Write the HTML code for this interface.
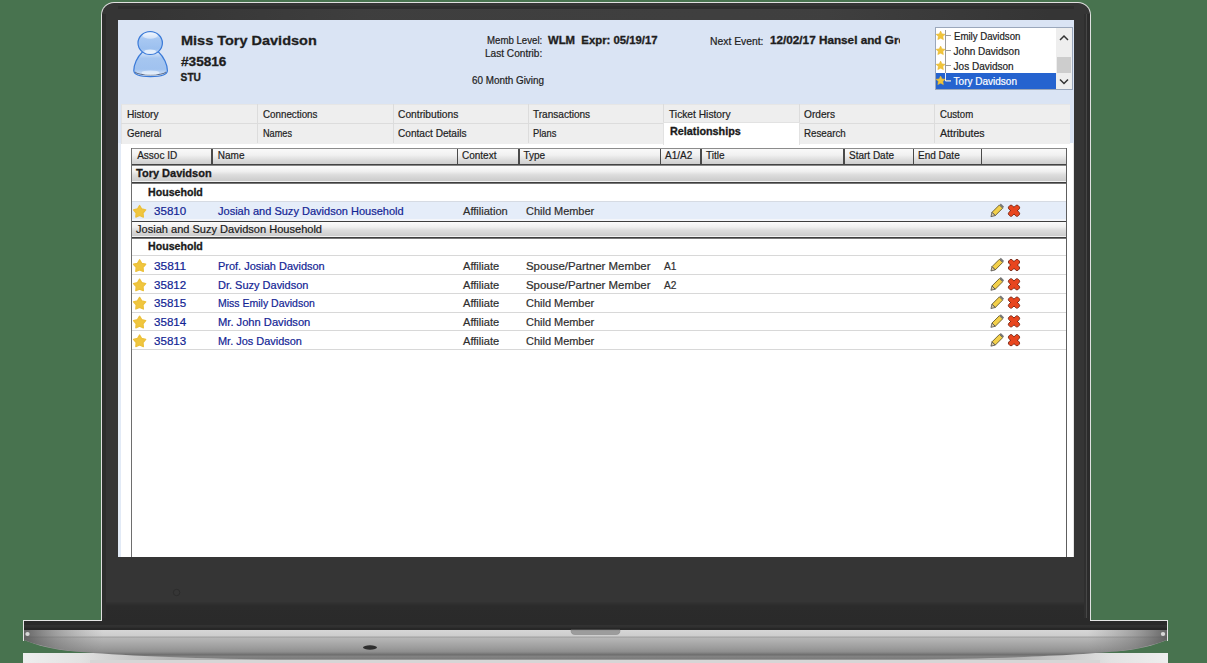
<!DOCTYPE html>
<html><head><meta charset="utf-8">
<style>
*{margin:0;padding:0;box-sizing:border-box}
html,body{width:1207px;height:663px;overflow:hidden;background:#48734f;font-family:"Liberation Sans",sans-serif;position:relative}
.a{position:absolute}
.t{position:absolute;white-space:nowrap;-webkit-text-stroke:0.2px currentColor}
svg{position:absolute;overflow:visible}
</style></head><body>

<div class="a" style="left:101px;top:2px;width:990px;height:620px;background:#e0e0e0;border-radius:13px 13px 0 0"></div>
<div class="a" style="left:102px;top:3px;width:988px;height:618px;background:#353535;border-radius:12px 12px 0 0"></div>
<div class="a" style="left:102px;top:602px;width:988px;height:19px;background:linear-gradient(#333,#2b2b2b 4px,#2a2a2a)"></div>
<div class="a" style="left:140px;top:9px;width:910px;height:11px;background:linear-gradient(90deg,rgba(70,70,70,0),rgba(70,70,70,0.55) 25%,rgba(70,70,70,0.6) 75%,rgba(70,70,70,0))"></div>
<div class="a" style="left:118px;top:6px;width:956px;height:3px;background:#2e2e2e"></div>
<div class="a" style="left:102px;top:14px;width:4px;height:604px;background:#2d2d2d"></div>
<div class="a" style="left:1084px;top:14px;width:2px;height:604px;background:#2f2f2f"></div>
<div class="a" style="left:1086px;top:14px;width:1px;height:604px;background:#474747"></div>
<div class="a" style="left:1087px;top:14px;width:3px;height:604px;background:#2b2b2b"></div>
<svg style="left:0;top:0" width="1207" height="663"><circle cx="176.6" cy="592.5" r="3.2" fill="#363636" stroke="#2a2a2a" stroke-width="0.9"/></svg>
<div class="a" style="left:118px;top:20px;width:956px;height:537px;background:#fff"></div>
<div class="a" style="left:118px;top:20px;width:956px;height:124px;background:#dae4f4"></div>
<div class="a" style="left:118px;top:143px;width:956px;height:414px;background:#fff;border-left:1px solid #e4e4e4;border-right:1px solid #e4e4e4"></div>
<svg style="left:130px;top:29px" width="42" height="52" viewBox="0 0 42 52">
<defs>
<linearGradient id="hg" x1="0" y1="0" x2="0" y2="1"><stop offset="0" stop-color="#f2f7fe"/><stop offset="0.3" stop-color="#a8c8f2"/><stop offset="0.75" stop-color="#9cc0ef"/><stop offset="1" stop-color="#cfe0f8"/></linearGradient>
<linearGradient id="bg" x1="0" y1="0" x2="0" y2="1"><stop offset="0" stop-color="#dce9fa"/><stop offset="0.25" stop-color="#a6c6f0"/><stop offset="0.7" stop-color="#a0c2ef"/><stop offset="1" stop-color="#e4eefb"/></linearGradient>
</defs>
<path d="M12.5 23 C7 28 3.8 36 3.8 41.5 C3.8 46.5 12 47.6 20.5 47.6 C29 47.6 37.4 46.5 37.4 41.5 C37.4 36 34 28 28.5 23 Z" fill="url(#bg)" stroke="#3a7ad8" stroke-width="1.2"/>
<path d="M5 43 C8 47 33 47 36 43" fill="none" stroke="#5a6a88" stroke-width="1"/>
<ellipse cx="20.2" cy="14.1" rx="12.2" ry="11.4" fill="url(#hg)" stroke="#3a7ad8" stroke-width="1.2"/>
<ellipse cx="20.2" cy="6.5" rx="7.5" ry="3.2" fill="#f4f8fe" opacity="0.55"/>
<ellipse cx="20.2" cy="22.6" rx="6" ry="2.2" fill="#f4f8fe" opacity="0.75"/>
<ellipse cx="20.5" cy="43.8" rx="9" ry="2.4" fill="#f4f8fe" opacity="0.6"/>
</svg>
<div class="t" style="left:180.60px;top:34.39px;font-size:13.6px;line-height:13.6px;color:#1e1e1e;font-weight:bold;-webkit-text-stroke:0.3px currentColor;transform:scaleX(1.0653);transform-origin:0.00px 0;">Miss Tory Davidson</div>
<div class="t" style="left:180.60px;top:56.44px;font-size:12.0px;line-height:12.0px;color:#1e1e1e;font-weight:bold;-webkit-text-stroke:0.3px currentColor;transform:scaleX(1.1338);transform-origin:0.00px 0;">#35816</div>
<div class="t" style="left:180.60px;top:72.87px;font-size:10.2px;line-height:10.2px;color:#1e1e1e;font-weight:bold;-webkit-text-stroke:0.3px currentColor;transform:scaleX(1.0000);transform-origin:0.00px 0;">STU</div>
<div class="t" style="left:487.40px;top:36.23px;font-size:10.0px;line-height:10.0px;color:#222;transform:scaleX(0.9642);transform-origin:0.00px 0;">Memb Level:</div>
<div class="t" style="left:547.80px;top:36.14px;font-size:10.0px;line-height:10.0px;color:#1e1e1e;font-weight:bold;-webkit-text-stroke:0.3px currentColor;transform:scaleX(1.1334);transform-origin:0.00px 0;">WLM&nbsp; Expr: 05/19/17</div>
<div class="t" style="left:485.40px;top:49.23px;font-size:10.0px;line-height:10.0px;color:#222;transform:scaleX(1.0090);transform-origin:0.00px 0;">Last Contrib:</div>
<div class="t" style="left:471.50px;top:75.73px;font-size:10.0px;line-height:10.0px;color:#222;transform:scaleX(0.9887);transform-origin:0.00px 0;">60 Month Giving</div>
<div class="t" style="left:710.00px;top:36.53px;font-size:10.0px;line-height:10.0px;color:#222;transform:scaleX(1.0350);transform-origin:0.00px 0;">Next Event:</div>
<div class="a" style="left:769px;top:30px;width:131px;height:20px;overflow:hidden">
<div class="t" style="left:0.60px;top:6.44px;font-size:10.0px;line-height:10.0px;color:#1e1e1e;font-weight:bold;-webkit-text-stroke:0.3px currentColor;transform:scaleX(1.1733);transform-origin:0.00px 0;">12/02/17 Hansel and Gre</div>
</div>
<div class="a" style="left:935px;top:27px;width:138px;height:63px;background:#fff;border:1px solid #9aa7bb"></div>
<div class="a" style="left:1056px;top:28px;width:16px;height:61px;background:#eeeeee"></div>
<div class="a" style="left:1057px;top:57px;width:14px;height:16px;background:#cdcdcd"></div>
<div class="a" style="left:936px;top:73px;width:120px;height:16px;background:#2563cf"></div>
<svg style="left:0;top:0" width="1207" height="663">
<path d="M1060 40 L1064 36 L1068 40" fill="none" stroke="#333" stroke-width="1.5"/>
<path d="M1060 79.5 L1064 83.5 L1068 79.5" fill="none" stroke="#333" stroke-width="1.5"/>
<path d="M945.5 30 V81 M945.5 35.5 H951 M945.5 50.5 H951 M945.5 65.5 H951 M945.5 80.5 H951" stroke="#9a9a9a" stroke-width="1" fill="none"/><path d="M945.5 73 V81 H951" stroke="#e8eefa" stroke-width="1" fill="none"/>
</svg>
<svg style="left:0;top:0" width="1207" height="663"><polygon points="940.60,31.10 941.98,33.90 945.07,34.35 942.83,36.53 943.36,39.60 940.60,38.15 937.84,39.60 938.37,36.53 936.13,34.35 939.22,33.90" fill="#f0c43a" stroke="#e8b830" stroke-width="0.6" stroke-linejoin="round"/><polygon points="940.60,46.10 941.98,48.90 945.07,49.35 942.83,51.53 943.36,54.60 940.60,53.15 937.84,54.60 938.37,51.53 936.13,49.35 939.22,48.90" fill="#f0c43a" stroke="#e8b830" stroke-width="0.6" stroke-linejoin="round"/><polygon points="940.60,61.10 941.98,63.90 945.07,64.35 942.83,66.53 943.36,69.60 940.60,68.15 937.84,69.60 938.37,66.53 936.13,64.35 939.22,63.90" fill="#f0c43a" stroke="#e8b830" stroke-width="0.6" stroke-linejoin="round"/><polygon points="940.60,76.10 941.98,78.90 945.07,79.35 942.83,81.53 943.36,84.60 940.60,83.15 937.84,84.60 938.37,81.53 936.13,79.35 939.22,78.90" fill="#f0c43a" stroke="#e8b830" stroke-width="0.6" stroke-linejoin="round"/></svg>
<div class="t" style="left:953.60px;top:32.03px;font-size:10.0px;line-height:10.0px;color:#222;transform:scaleX(0.9636);transform-origin:0.00px 0;">Emily Davidson</div>
<div class="t" style="left:953.60px;top:47.03px;font-size:10.0px;line-height:10.0px;color:#222;">John Davidson</div>
<div class="t" style="left:953.60px;top:62.03px;font-size:10.0px;line-height:10.0px;color:#222;">Jos Davidson</div>
<div class="t" style="left:953.60px;top:77.03px;font-size:10.0px;line-height:10.0px;color:#fff;">Tory Davidson</div>
<div class="a" style="left:121px;top:104px;width:949px;height:39.5px;background:#eeeeee;border-left:1px solid #e2e2e2;border-top:1px solid #e6e6e6"></div>
<div class="a" style="left:257px;top:104px;width:1px;height:39px;background:#dcdcdc"></div>
<div class="a" style="left:393px;top:104px;width:1px;height:39px;background:#dcdcdc"></div>
<div class="a" style="left:528px;top:104px;width:1px;height:39px;background:#dcdcdc"></div>
<div class="a" style="left:663px;top:104px;width:1px;height:39px;background:#dcdcdc"></div>
<div class="a" style="left:799px;top:104px;width:1px;height:39px;background:#dcdcdc"></div>
<div class="a" style="left:934px;top:104px;width:1px;height:39px;background:#dcdcdc"></div>
<div class="a" style="left:121px;top:123px;width:949px;height:1px;background:#dcdcdc"></div>
<div class="a" style="left:663px;top:122px;width:137px;height:23px;background:#fff;border-left:1px solid #e2e2e2;border-right:1px solid #e2e2e2;border-top:1px solid #e2e2e2"></div>
<div class="t" style="left:127.20px;top:109.77px;font-size:10.2px;line-height:10.2px;color:#222;transform:scaleX(0.9927);transform-origin:0.00px 0;">History</div>
<div class="t" style="left:127.20px;top:128.97px;font-size:10.2px;line-height:10.2px;color:#222;transform:scaleX(0.9479);transform-origin:0.00px 0;">General</div>
<div class="t" style="left:262.60px;top:109.77px;font-size:10.2px;line-height:10.2px;color:#222;transform:scaleX(0.9612);transform-origin:0.00px 0;">Connections</div>
<div class="t" style="left:262.60px;top:128.97px;font-size:10.2px;line-height:10.2px;color:#222;transform:scaleX(0.8975);transform-origin:0.00px 0;">Names</div>
<div class="t" style="left:398.00px;top:109.77px;font-size:10.2px;line-height:10.2px;color:#222;transform:scaleX(1.0050);transform-origin:0.00px 0;">Contributions</div>
<div class="t" style="left:398.00px;top:128.97px;font-size:10.2px;line-height:10.2px;color:#222;transform:scaleX(0.9918);transform-origin:0.00px 0;">Contact Details</div>
<div class="t" style="left:533.40px;top:109.77px;font-size:10.2px;line-height:10.2px;color:#222;transform:scaleX(0.9859);transform-origin:0.00px 0;">Transactions</div>
<div class="t" style="left:533.40px;top:128.97px;font-size:10.2px;line-height:10.2px;color:#222;transform:scaleX(0.9173);transform-origin:0.00px 0;">Plans</div>
<div class="t" style="left:668.80px;top:109.77px;font-size:10.2px;line-height:10.2px;color:#222;transform:scaleX(1.0034);transform-origin:0.00px 0;">Ticket History</div>
<div class="t" style="left:669.70px;top:127.30px;font-size:10.4px;line-height:10.4px;color:#1a1a1a;font-weight:bold;-webkit-text-stroke:0.3px currentColor;transform:scaleX(1.0397);transform-origin:0.00px 0;">Relationships</div>
<div class="t" style="left:804.20px;top:109.77px;font-size:10.2px;line-height:10.2px;color:#222;transform:scaleX(0.9945);transform-origin:0.00px 0;">Orders</div>
<div class="t" style="left:804.20px;top:128.97px;font-size:10.2px;line-height:10.2px;color:#222;transform:scaleX(0.9575);transform-origin:0.00px 0;">Research</div>
<div class="t" style="left:939.60px;top:109.77px;font-size:10.2px;line-height:10.2px;color:#222;transform:scaleX(0.9448);transform-origin:0.00px 0;">Custom</div>
<div class="t" style="left:939.60px;top:128.97px;font-size:10.2px;line-height:10.2px;color:#222;transform:scaleX(1.0375);transform-origin:0.00px 0;">Attributes</div>
<div class="a" style="left:118px;top:143px;width:3px;height:414px;background:#e2eaf6"></div>
<div class="a" style="left:131px;top:148px;width:936px;height:409px;background:#fff;border-left:1px solid #6e6e6e;border-right:1px solid #5e5e5e"></div>
<div class="a" style="left:132px;top:148px;width:934px;height:1px;background:#8c8c8c"></div>
<div class="a" style="left:132px;top:149px;width:934px;height:15px;background:linear-gradient(#f9f9f9,#f1f1f1 40%,#dedede 70%,#cfcfcf)"></div>
<div class="a" style="left:132px;top:164px;width:934px;height:1px;background:#444"></div>
<div class="a" style="left:132px;top:165px;width:934px;height:0.5px;background:#888"></div>
<div class="a" style="left:211px;top:149px;width:1.6px;height:15px;background:#4a4a4a"></div>
<div class="a" style="left:456.5px;top:149px;width:1.6px;height:15px;background:#4a4a4a"></div>
<div class="a" style="left:518px;top:149px;width:1.6px;height:15px;background:#4a4a4a"></div>
<div class="a" style="left:659.5px;top:149px;width:1.6px;height:15px;background:#4a4a4a"></div>
<div class="a" style="left:700px;top:149px;width:1.6px;height:15px;background:#4a4a4a"></div>
<div class="a" style="left:843px;top:149px;width:1.6px;height:15px;background:#4a4a4a"></div>
<div class="a" style="left:912.5px;top:149px;width:1.6px;height:15px;background:#4a4a4a"></div>
<div class="a" style="left:980.5px;top:149px;width:1.6px;height:15px;background:#4a4a4a"></div>
<div class="t" style="left:137.20px;top:151.34px;font-size:10.0px;line-height:10.0px;color:#1e1e1e;">Assoc ID</div>
<div class="t" style="left:217.80px;top:151.34px;font-size:10.0px;line-height:10.0px;color:#1e1e1e;">Name</div>
<div class="t" style="left:462.00px;top:151.34px;font-size:10.0px;line-height:10.0px;color:#1e1e1e;">Context</div>
<div class="t" style="left:523.50px;top:151.34px;font-size:10.0px;line-height:10.0px;color:#1e1e1e;">Type</div>
<div class="t" style="left:665.00px;top:151.34px;font-size:10.0px;line-height:10.0px;color:#1e1e1e;">A1/A2</div>
<div class="t" style="left:706.00px;top:151.34px;font-size:10.0px;line-height:10.0px;color:#1e1e1e;">Title</div>
<div class="t" style="left:849.00px;top:151.34px;font-size:10.0px;line-height:10.0px;color:#1e1e1e;">Start Date</div>
<div class="t" style="left:918.00px;top:151.34px;font-size:10.0px;line-height:10.0px;color:#1e1e1e;">End Date</div>
<div class="a" style="left:132px;top:165.5px;width:934px;height:15.5px;background:linear-gradient(#fcfcfc,#f0f0f0 35%,#dcdcdc 60%,#cccccc)"></div>
<div class="a" style="left:132px;top:181px;width:934px;height:1px;background:#f2f2f2"></div>
<div class="a" style="left:132px;top:182px;width:934px;height:1px;background:#3e3e3e"></div>
<div class="a" style="left:132px;top:183px;width:934px;height:0.4px;background:#777"></div>
<div class="t" style="left:136.30px;top:168.46px;font-size:10.8px;line-height:10.8px;color:#1a1a1a;font-weight:bold;-webkit-text-stroke:0.3px currentColor;transform:scaleX(1.0200);transform-origin:0.00px 0;">Tory Davidson</div>
<div class="t" style="left:147.60px;top:187.50px;font-size:10.4px;line-height:10.4px;color:#1a1a1a;font-weight:bold;-webkit-text-stroke:0.3px currentColor;transform:scaleX(1.0216);transform-origin:0.00px 0;">Household</div>
<div class="a" style="left:132px;top:201px;width:934px;height:1px;background:#d6dbe3"></div>
<div class="a" style="left:132px;top:202px;width:934px;height:17px;background:#e5edf9"></div>
<div class="a" style="left:132px;top:219px;width:934px;height:2px;background:#f4f6fa"></div>
<div class="a" style="left:132px;top:221px;width:934px;height:1px;background:#3e3e3e"></div>
<div class="a" style="left:132px;top:222px;width:934px;height:14px;background:linear-gradient(#fcfcfc,#f0f0f0 35%,#dcdcdc 60%,#cccccc)"></div>
<div class="a" style="left:132px;top:236px;width:934px;height:1px;background:#f2f2f2"></div>
<div class="a" style="left:132px;top:237px;width:934px;height:1px;background:#3e3e3e"></div>
<div class="a" style="left:132px;top:238px;width:934px;height:0.4px;background:#777"></div>
<div class="t" style="left:136.00px;top:223.69px;font-size:11.0px;line-height:11.0px;color:#1a1a1a;transform:scaleX(1.0039);transform-origin:0.00px 0;">Josiah and Suzy Davidson Household</div>
<div class="t" style="left:147.60px;top:241.60px;font-size:10.4px;line-height:10.4px;color:#1a1a1a;font-weight:bold;-webkit-text-stroke:0.3px currentColor;transform:scaleX(1.0216);transform-origin:0.00px 0;">Household</div>
<div class="a" style="left:132px;top:255px;width:934px;height:1px;background:#d8d8d8"></div>
<div class="a" style="left:132px;top:274px;width:934px;height:1px;background:#d8d8d8"></div>
<div class="a" style="left:132px;top:293px;width:934px;height:1px;background:#d8d8d8"></div>
<div class="a" style="left:132px;top:312px;width:934px;height:1px;background:#d8d8d8"></div>
<div class="a" style="left:132px;top:330px;width:934px;height:1px;background:#d8d8d8"></div>
<div class="a" style="left:132px;top:349px;width:934px;height:1px;background:#d8d8d8"></div>
<div class="t" style="left:154.40px;top:206.29px;font-size:11.0px;line-height:11.0px;color:#122494;transform:scaleX(1.0526);transform-origin:0.00px 0;">35810</div>
<div class="t" style="left:218.20px;top:206.29px;font-size:11.0px;line-height:11.0px;color:#122494;transform:scaleX(1.0022);transform-origin:0.00px 0;">Josiah and Suzy Davidson Household</div>
<div class="t" style="left:463.30px;top:206.29px;font-size:11.0px;line-height:11.0px;color:#2e2e2e;transform:scaleX(1.0059);transform-origin:0.00px 0;">Affiliation</div>
<div class="t" style="left:526.00px;top:206.29px;font-size:11.0px;line-height:11.0px;color:#2e2e2e;transform:scaleX(0.9961);transform-origin:0.00px 0;">Child Member</div>
<div class="t" style="left:154.40px;top:260.59px;font-size:11.0px;line-height:11.0px;color:#122494;transform:scaleX(1.0814);transform-origin:0.00px 0;">35811</div>
<div class="t" style="left:218.20px;top:260.59px;font-size:11.0px;line-height:11.0px;color:#122494;transform:scaleX(0.9972);transform-origin:0.00px 0;">Prof. Josiah Davidson</div>
<div class="t" style="left:463.30px;top:260.59px;font-size:11.0px;line-height:11.0px;color:#2e2e2e;transform:scaleX(1.0092);transform-origin:0.00px 0;">Affiliate</div>
<div class="t" style="left:526.00px;top:260.59px;font-size:11.0px;line-height:11.0px;color:#2e2e2e;transform:scaleX(1.0389);transform-origin:0.00px 0;">Spouse/Partner Member</div>
<div class="t" style="left:663.80px;top:260.59px;font-size:11.0px;line-height:11.0px;color:#2e2e2e;transform:scaleX(0.9217);transform-origin:0.00px 0;">A1</div>
<div class="t" style="left:154.40px;top:279.89px;font-size:11.0px;line-height:11.0px;color:#122494;transform:scaleX(1.0526);transform-origin:0.00px 0;">35812</div>
<div class="t" style="left:218.20px;top:279.89px;font-size:11.0px;line-height:11.0px;color:#122494;transform:scaleX(0.9990);transform-origin:0.00px 0;">Dr. Suzy Davidson</div>
<div class="t" style="left:463.30px;top:279.89px;font-size:11.0px;line-height:11.0px;color:#2e2e2e;transform:scaleX(1.0092);transform-origin:0.00px 0;">Affiliate</div>
<div class="t" style="left:526.00px;top:279.89px;font-size:11.0px;line-height:11.0px;color:#2e2e2e;transform:scaleX(1.0389);transform-origin:0.00px 0;">Spouse/Partner Member</div>
<div class="t" style="left:663.80px;top:279.89px;font-size:11.0px;line-height:11.0px;color:#2e2e2e;transform:scaleX(0.9217);transform-origin:0.00px 0;">A2</div>
<div class="t" style="left:154.40px;top:298.19px;font-size:11.0px;line-height:11.0px;color:#122494;transform:scaleX(1.0526);transform-origin:0.00px 0;">35815</div>
<div class="t" style="left:218.20px;top:298.19px;font-size:11.0px;line-height:11.0px;color:#122494;transform:scaleX(0.9540);transform-origin:0.00px 0;">Miss Emily Davidson</div>
<div class="t" style="left:463.30px;top:298.19px;font-size:11.0px;line-height:11.0px;color:#2e2e2e;transform:scaleX(1.0092);transform-origin:0.00px 0;">Affiliate</div>
<div class="t" style="left:526.00px;top:298.19px;font-size:11.0px;line-height:11.0px;color:#2e2e2e;transform:scaleX(0.9961);transform-origin:0.00px 0;">Child Member</div>
<div class="t" style="left:154.40px;top:316.99px;font-size:11.0px;line-height:11.0px;color:#122494;transform:scaleX(1.0526);transform-origin:0.00px 0;">35814</div>
<div class="t" style="left:218.20px;top:316.99px;font-size:11.0px;line-height:11.0px;color:#122494;transform:scaleX(1.0132);transform-origin:0.00px 0;">Mr. John Davidson</div>
<div class="t" style="left:463.30px;top:316.99px;font-size:11.0px;line-height:11.0px;color:#2e2e2e;transform:scaleX(1.0092);transform-origin:0.00px 0;">Affiliate</div>
<div class="t" style="left:526.00px;top:316.99px;font-size:11.0px;line-height:11.0px;color:#2e2e2e;transform:scaleX(0.9961);transform-origin:0.00px 0;">Child Member</div>
<div class="t" style="left:154.40px;top:335.79px;font-size:11.0px;line-height:11.0px;color:#122494;transform:scaleX(1.0526);transform-origin:0.00px 0;">35813</div>
<div class="t" style="left:218.20px;top:335.79px;font-size:11.0px;line-height:11.0px;color:#122494;transform:scaleX(0.9946);transform-origin:0.00px 0;">Mr. Jos Davidson</div>
<div class="t" style="left:463.30px;top:335.79px;font-size:11.0px;line-height:11.0px;color:#2e2e2e;transform:scaleX(1.0092);transform-origin:0.00px 0;">Affiliate</div>
<div class="t" style="left:526.00px;top:335.79px;font-size:11.0px;line-height:11.0px;color:#2e2e2e;transform:scaleX(0.9961);transform-origin:0.00px 0;">Child Member</div>
<svg style="left:0;top:0" width="1207" height="663"><polygon points="139.60,205.50 141.71,209.00 145.69,209.92 143.01,213.01 143.36,217.08 139.60,215.48 135.84,217.08 136.19,213.01 133.51,209.92 137.49,209.00" fill="#f0c63e" stroke="#ecc03a" stroke-width="1.3" stroke-linejoin="round"/><g transform="translate(996.8,210.8) rotate(-45)"><rect x="-4.5" y="-2.3" width="10.5" height="4.6" fill="#f3d04a" stroke="#5e5020" stroke-width="0.8"/><path d="M-4.5 -2.3 L-8.3 0 L-4.5 2.3 Z" fill="#d9c9a0" stroke="#444" stroke-width="0.7"/><rect x="6" y="-2.3" width="2" height="4.6" fill="#777"/></g><g transform="translate(1014,210.7) rotate(45)"><g fill="#e5441f" stroke="#6a2414" stroke-width="0.9"><rect x="-6.6" y="-2.4" width="13.2" height="4.8" rx="2"/><rect x="-2.4" y="-6.6" width="4.8" height="13.2" rx="2"/></g><g fill="#e8461f"><rect x="-6.2" y="-2" width="12.4" height="4" rx="1.8"/><rect x="-2" y="-6.2" width="4" height="12.4" rx="1.8"/></g></g><polygon points="139.60,259.80 141.71,263.30 145.69,264.22 143.01,267.31 143.36,271.38 139.60,269.78 135.84,271.38 136.19,267.31 133.51,264.22 137.49,263.30" fill="#f0c63e" stroke="#ecc03a" stroke-width="1.3" stroke-linejoin="round"/><g transform="translate(996.8,265.1) rotate(-45)"><rect x="-4.5" y="-2.3" width="10.5" height="4.6" fill="#f3d04a" stroke="#5e5020" stroke-width="0.8"/><path d="M-4.5 -2.3 L-8.3 0 L-4.5 2.3 Z" fill="#d9c9a0" stroke="#444" stroke-width="0.7"/><rect x="6" y="-2.3" width="2" height="4.6" fill="#777"/></g><g transform="translate(1014,265.0) rotate(45)"><g fill="#e5441f" stroke="#6a2414" stroke-width="0.9"><rect x="-6.6" y="-2.4" width="13.2" height="4.8" rx="2"/><rect x="-2.4" y="-6.6" width="4.8" height="13.2" rx="2"/></g><g fill="#e8461f"><rect x="-6.2" y="-2" width="12.4" height="4" rx="1.8"/><rect x="-2" y="-6.2" width="4" height="12.4" rx="1.8"/></g></g><polygon points="139.60,279.10 141.71,282.60 145.69,283.52 143.01,286.61 143.36,290.68 139.60,289.08 135.84,290.68 136.19,286.61 133.51,283.52 137.49,282.60" fill="#f0c63e" stroke="#ecc03a" stroke-width="1.3" stroke-linejoin="round"/><g transform="translate(996.8,284.4) rotate(-45)"><rect x="-4.5" y="-2.3" width="10.5" height="4.6" fill="#f3d04a" stroke="#5e5020" stroke-width="0.8"/><path d="M-4.5 -2.3 L-8.3 0 L-4.5 2.3 Z" fill="#d9c9a0" stroke="#444" stroke-width="0.7"/><rect x="6" y="-2.3" width="2" height="4.6" fill="#777"/></g><g transform="translate(1014,284.3) rotate(45)"><g fill="#e5441f" stroke="#6a2414" stroke-width="0.9"><rect x="-6.6" y="-2.4" width="13.2" height="4.8" rx="2"/><rect x="-2.4" y="-6.6" width="4.8" height="13.2" rx="2"/></g><g fill="#e8461f"><rect x="-6.2" y="-2" width="12.4" height="4" rx="1.8"/><rect x="-2" y="-6.2" width="4" height="12.4" rx="1.8"/></g></g><polygon points="139.60,297.40 141.71,300.90 145.69,301.82 143.01,304.91 143.36,308.98 139.60,307.38 135.84,308.98 136.19,304.91 133.51,301.82 137.49,300.90" fill="#f0c63e" stroke="#ecc03a" stroke-width="1.3" stroke-linejoin="round"/><g transform="translate(996.8,302.7) rotate(-45)"><rect x="-4.5" y="-2.3" width="10.5" height="4.6" fill="#f3d04a" stroke="#5e5020" stroke-width="0.8"/><path d="M-4.5 -2.3 L-8.3 0 L-4.5 2.3 Z" fill="#d9c9a0" stroke="#444" stroke-width="0.7"/><rect x="6" y="-2.3" width="2" height="4.6" fill="#777"/></g><g transform="translate(1014,302.6) rotate(45)"><g fill="#e5441f" stroke="#6a2414" stroke-width="0.9"><rect x="-6.6" y="-2.4" width="13.2" height="4.8" rx="2"/><rect x="-2.4" y="-6.6" width="4.8" height="13.2" rx="2"/></g><g fill="#e8461f"><rect x="-6.2" y="-2" width="12.4" height="4" rx="1.8"/><rect x="-2" y="-6.2" width="4" height="12.4" rx="1.8"/></g></g><polygon points="139.60,316.20 141.71,319.70 145.69,320.62 143.01,323.71 143.36,327.78 139.60,326.18 135.84,327.78 136.19,323.71 133.51,320.62 137.49,319.70" fill="#f0c63e" stroke="#ecc03a" stroke-width="1.3" stroke-linejoin="round"/><g transform="translate(996.8,321.5) rotate(-45)"><rect x="-4.5" y="-2.3" width="10.5" height="4.6" fill="#f3d04a" stroke="#5e5020" stroke-width="0.8"/><path d="M-4.5 -2.3 L-8.3 0 L-4.5 2.3 Z" fill="#d9c9a0" stroke="#444" stroke-width="0.7"/><rect x="6" y="-2.3" width="2" height="4.6" fill="#777"/></g><g transform="translate(1014,321.4) rotate(45)"><g fill="#e5441f" stroke="#6a2414" stroke-width="0.9"><rect x="-6.6" y="-2.4" width="13.2" height="4.8" rx="2"/><rect x="-2.4" y="-6.6" width="4.8" height="13.2" rx="2"/></g><g fill="#e8461f"><rect x="-6.2" y="-2" width="12.4" height="4" rx="1.8"/><rect x="-2" y="-6.2" width="4" height="12.4" rx="1.8"/></g></g><polygon points="139.60,335.00 141.71,338.50 145.69,339.42 143.01,342.51 143.36,346.58 139.60,344.98 135.84,346.58 136.19,342.51 133.51,339.42 137.49,338.50" fill="#f0c63e" stroke="#ecc03a" stroke-width="1.3" stroke-linejoin="round"/><g transform="translate(996.8,340.3) rotate(-45)"><rect x="-4.5" y="-2.3" width="10.5" height="4.6" fill="#f3d04a" stroke="#5e5020" stroke-width="0.8"/><path d="M-4.5 -2.3 L-8.3 0 L-4.5 2.3 Z" fill="#d9c9a0" stroke="#444" stroke-width="0.7"/><rect x="6" y="-2.3" width="2" height="4.6" fill="#777"/></g><g transform="translate(1014,340.2) rotate(45)"><g fill="#e5441f" stroke="#6a2414" stroke-width="0.9"><rect x="-6.6" y="-2.4" width="13.2" height="4.8" rx="2"/><rect x="-2.4" y="-6.6" width="4.8" height="13.2" rx="2"/></g><g fill="#e8461f"><rect x="-6.2" y="-2" width="12.4" height="4" rx="1.8"/><rect x="-2" y="-6.2" width="4" height="12.4" rx="1.8"/></g></g></svg>
<svg style="left:0;top:0" width="1207" height="663">
<defs>
<linearGradient id="baseg" x1="0" y1="621" x2="0" y2="660" gradientUnits="userSpaceOnUse">
<stop offset="0" stop-color="#2a2a2a"/>
<stop offset="0.09" stop-color="#2a2a2a"/>
<stop offset="0.11" stop-color="#323232"/>
<stop offset="0.16" stop-color="#303030"/>
<stop offset="0.18" stop-color="#272727"/>
<stop offset="0.23" stop-color="#272727"/>
<stop offset="0.235" stop-color="#d6d6d6"/>
<stop offset="0.385" stop-color="#cdcdcd"/>
<stop offset="0.41" stop-color="#a2a2a2"/>
<stop offset="0.45" stop-color="#b6b6b6"/>
<stop offset="0.56" stop-color="#aaaaaa"/>
<stop offset="0.69" stop-color="#9c9c9c"/>
<stop offset="0.79" stop-color="#8e8e8e"/>
<stop offset="0.87" stop-color="#6c6c6c"/>
<stop offset="0.90" stop-color="#838383"/>
<stop offset="0.97" stop-color="#7c7c7c"/>
<stop offset="1" stop-color="#7c7c7c"/>
</linearGradient>
<linearGradient id="refl" x1="23" y1="0" x2="1168" y2="0" gradientUnits="userSpaceOnUse">
<stop offset="0" stop-color="#eeeeee"/>
<stop offset="0.05" stop-color="#e2e2e2"/>
<stop offset="0.13" stop-color="#b4b4b4"/>
<stop offset="0.87" stop-color="#b4b4b4"/>
<stop offset="0.95" stop-color="#e2e2e2"/>
<stop offset="1" stop-color="#eeeeee"/>
</linearGradient>
<linearGradient id="lend" x1="23" y1="0" x2="1168" y2="0" gradientUnits="userSpaceOnUse">
<stop offset="0" stop-color="#505050" stop-opacity="0.85"/>
<stop offset="0.03" stop-color="#707070" stop-opacity="0.5"/>
<stop offset="0.07" stop-color="#888" stop-opacity="0"/>
<stop offset="0.93" stop-color="#888" stop-opacity="0"/>
<stop offset="0.97" stop-color="#707070" stop-opacity="0.5"/>
<stop offset="1" stop-color="#505050" stop-opacity="0.85"/>
</linearGradient>
</defs>
<rect x="23" y="653" width="1145" height="10" fill="url(#refl)"/>
<rect x="23" y="660" width="1145" height="3" fill="url(#refl)" opacity="0.6"/><rect x="90" y="660" width="1010" height="3" fill="#d6d6d6"/>
<rect x="23" y="620" width="79" height="1" fill="#e6e6e6"/><rect x="1090" y="620" width="78" height="1" fill="#e6e6e6"/><rect x="23" y="620" width="1" height="21" fill="#e6e6e6"/><rect x="1167" y="620" width="1" height="21" fill="#e6e6e6"/>
<path d="M24 621 H1167 V640 C1155 645 1140 649 1121 651 C1080 655 1000 659 900 659.5 H290 C190 659 110 655 70 651 C51 649 36 645 24 640 Z" fill="url(#baseg)"/>
<path d="M24 630 H1167 V640 C1150 646 1135 650 1100 653 L1060 630 H130 L90 653 C58 650 40 646 24 640 Z" fill="url(#lend)"/>
<path d="M571 630 H620 C620 633 619 634.5 616 634.5 H575 C572 634.5 571 633 571 630 Z" fill="#9c9c9c" stroke="#8a8a8a" stroke-width="0.6"/>
<ellipse cx="370" cy="647.5" rx="7" ry="2.2" fill="#2e2e2e"/>
<ellipse cx="27.5" cy="634" rx="2.2" ry="2" fill="#d8d8d8"/>
<ellipse cx="1163" cy="634" rx="2.2" ry="2" fill="#d8d8d8"/>
</svg>
</body></html>
